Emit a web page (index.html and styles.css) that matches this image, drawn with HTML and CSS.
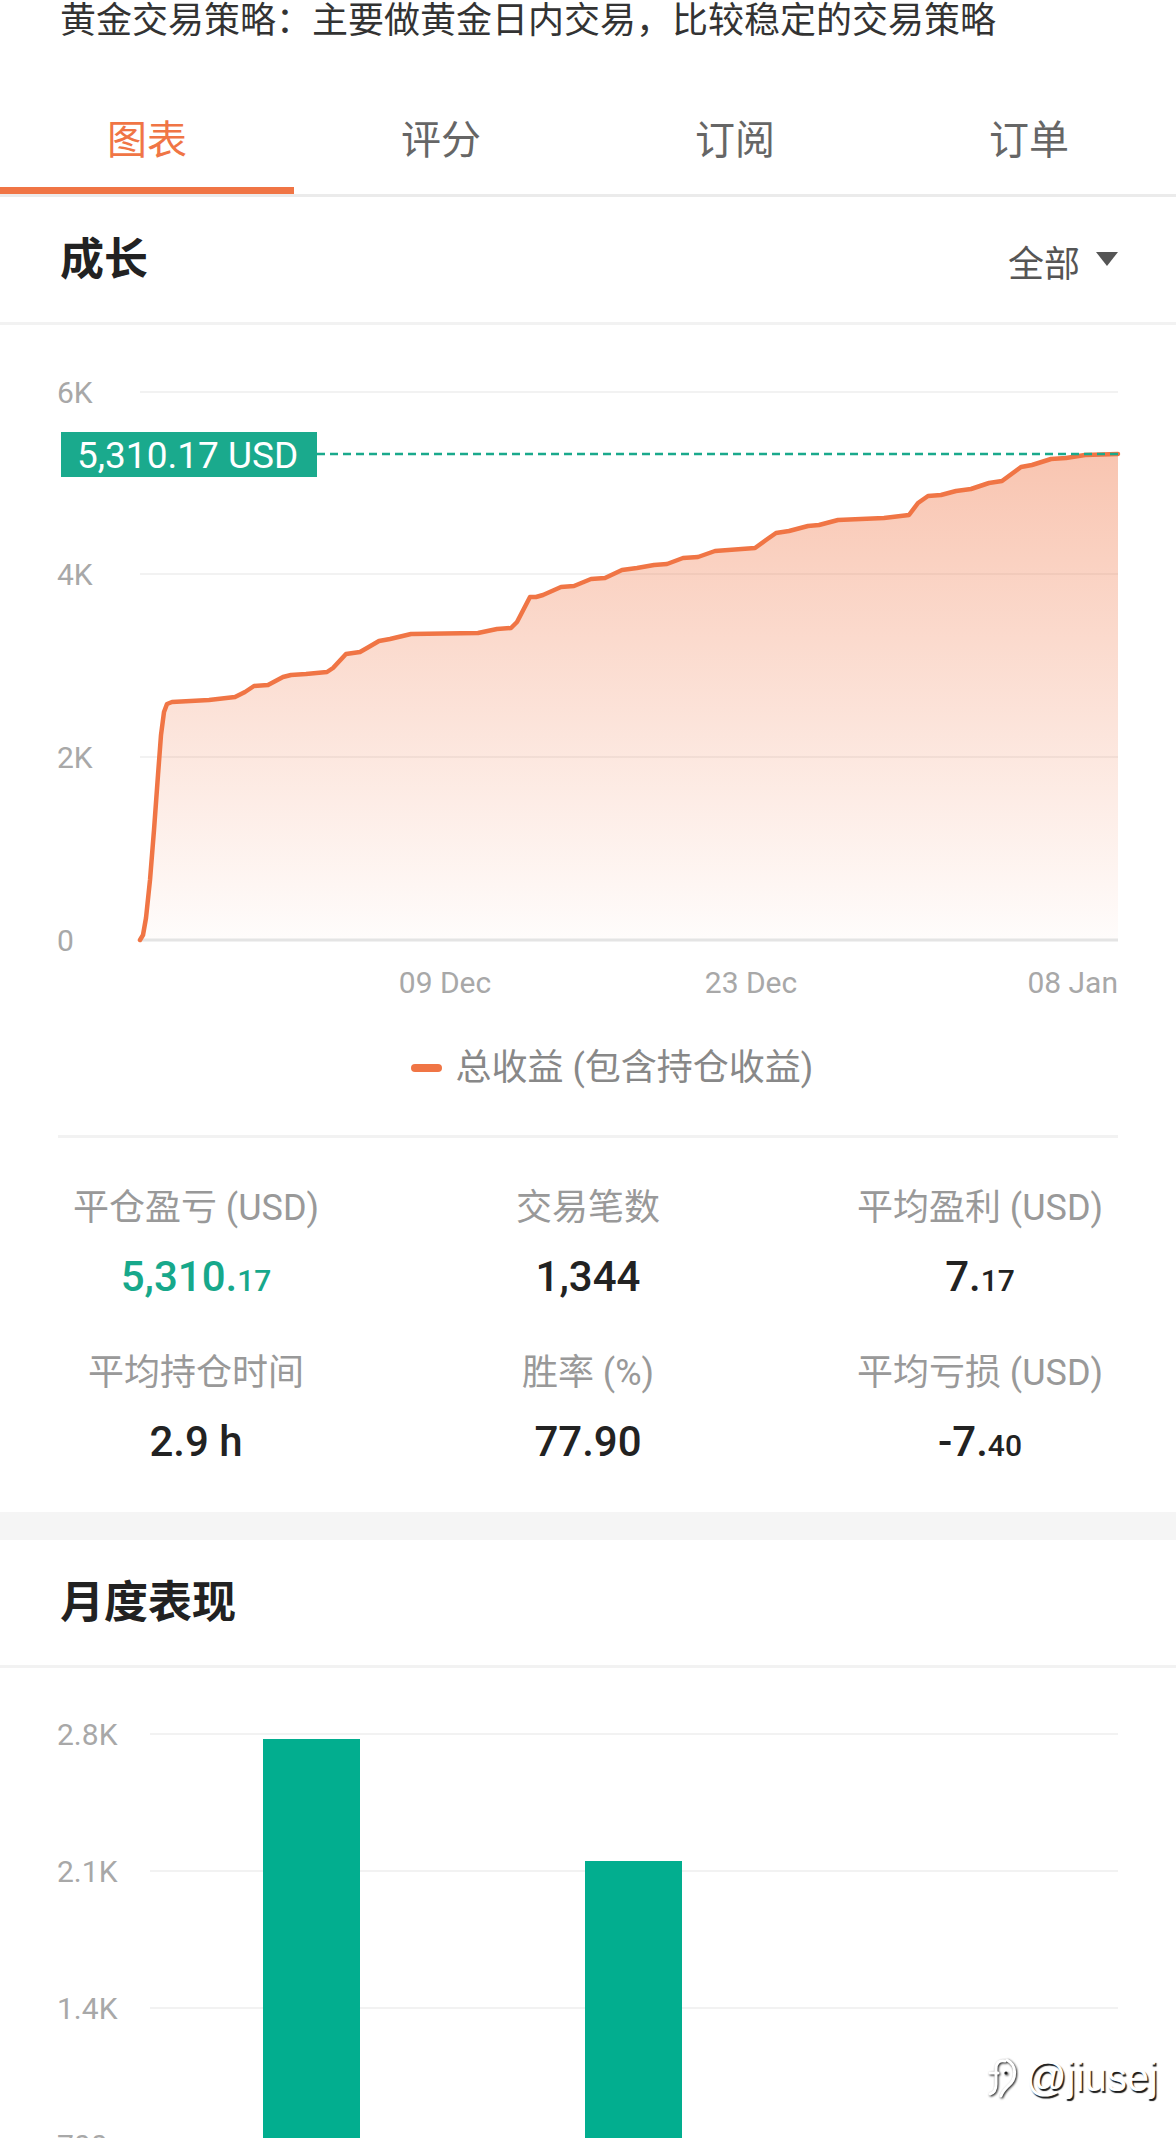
FILE: index.html
```html
<!DOCTYPE html>
<html lang="zh-CN">
<head>
<meta charset="utf-8">
<title>黄金交易策略</title>
<link rel="stylesheet" href="styles.css">
</head>
<body>
<div class="page">
  <div class="intro">黄金交易策略：主要做黄金日内交易，比较稳定的交易策略</div>

  <nav class="tabs">
    <div class="tab active">图表</div>
    <div class="tab">评分</div>
    <div class="tab">订阅</div>
    <div class="tab">订单</div>
  </nav>

  <section class="card">
    <header class="section-head">
      <h2 class="section-title">成长</h2>
      <div class="range">全部
        <svg class="caret" width="24" height="16" viewBox="0 0 24 16"><polygon points="1,1 23,1 12,15" fill="#555"/></svg>
      </div>
    </header>

    <svg class="growth-chart" width="1176" height="685" viewBox="0 0 1176 685">
      <defs>
        <linearGradient id="areaFill" x1="0" y1="129" x2="0" y2="615" gradientUnits="userSpaceOnUse">
          <stop offset="0" stop-color="#f07545" stop-opacity="0.42"/>
          <stop offset="1" stop-color="#f07545" stop-opacity="0.02"/>
        </linearGradient>
      </defs>
      <g class="grid">
        <line x1="140" y1="67" x2="1118" y2="67"/>
        <line x1="140" y1="249" x2="1118" y2="249"/>
        <line x1="140" y1="432" x2="1118" y2="432"/>
      </g>
      <path class="area" fill="url(#areaFill)" d="M140,615 L143,610 L146,593 L150,555 L154,505 L158,450 L161,410 L164,387 L167,379 L172,377 L209,375 L235,372 L245,367 L254,361 L268,360 L283,352 L291,350 L306,349 L327,347 L333,343 L346,329 L360,327 L367,323 L379,316 L390,314 L411,309 L478,308 L497,304 L511,303 L517,297 L530,272 L536,272 L543,270 L561,262 L574,261 L591,254 L605,253 L622,245 L637,243 L654,240 L667,239 L683,233 L698,232 L715,226 L755,223 L766,215 L776,208 L789,206 L808,201 L819,200 L838,195 L884,193 L909,190 L918,178 L928,171 L941,170 L956,166 L971,164 L989,158 L1002,156 L1021,142 L1032,140 L1051,134 L1066,133 L1085,130 L1118,129 L1118,615 Z"/>
      <line class="axis" x1="140" y1="615" x2="1118" y2="615"/>
      <polyline class="curve" points="140,615 143,610 146,593 150,555 154,505 158,450 161,410 164,387 167,379 172,377 209,375 235,372 245,367 254,361 268,360 283,352 291,350 306,349 327,347 333,343 346,329 360,327 367,323 379,316 390,314 411,309 478,308 497,304 511,303 517,297 530,272 536,272 543,270 561,262 574,261 591,254 605,253 622,245 637,243 654,240 667,239 683,233 698,232 715,226 755,223 766,215 776,208 789,206 808,201 819,200 838,195 884,193 909,190 918,178 928,171 941,170 956,166 971,164 989,158 1002,156 1021,142 1032,140 1051,134 1066,133 1085,130 1118,129"/>
      <line class="mark-line" x1="317" y1="129" x2="1118" y2="129"/>
      <rect class="mark-badge" x="61" y="107" width="256" height="45"/>
      <text class="mark-text" x="77" y="143">5,310.17 USD</text>
      <g class="ylabels">
        <text x="57" y="67">6K</text>
        <text x="57" y="249">4K</text>
        <text x="57" y="432">2K</text>
        <text x="57" y="615">0</text>
      </g>
      <g class="xlabels">
        <text x="445" y="657" text-anchor="middle">09 Dec</text>
        <text x="751" y="657" text-anchor="middle">23 Dec</text>
        <text x="1118" y="657" text-anchor="end">08 Jan</text>
      </g>
    </svg>

    <div class="legend"><span class="legend-dash"></span><span class="legend-text">总收益 (包含持仓收益)</span></div>
    <div class="divider"></div>

    <div class="stats">
      <div class="stat">
        <div class="stat-label">平仓盈亏 (USD)</div>
        <div class="stat-value positive">5,310.<span class="frac">17</span></div>
      </div>
      <div class="stat">
        <div class="stat-label">交易笔数</div>
        <div class="stat-value">1,344</div>
      </div>
      <div class="stat">
        <div class="stat-label">平均盈利 (USD)</div>
        <div class="stat-value">7.<span class="frac">17</span></div>
      </div>
      <div class="stat">
        <div class="stat-label">平均持仓时间</div>
        <div class="stat-value">2.9 h</div>
      </div>
      <div class="stat">
        <div class="stat-label">胜率 (%)</div>
        <div class="stat-value">77.90</div>
      </div>
      <div class="stat">
        <div class="stat-label">平均亏损 (USD)</div>
        <div class="stat-value">-7.<span class="frac">40</span></div>
      </div>
    </div>
  </section>

  <div class="band"></div>

  <section class="card">
    <header class="section-head">
      <h2 class="section-title">月度表现</h2>
    </header>
    <svg class="bar-chart" width="1176" height="640" viewBox="0 0 1176 640">
      <g class="grid">
        <line x1="150" y1="66" x2="1118" y2="66"/>
        <line x1="150" y1="203" x2="1118" y2="203"/>
        <line x1="150" y1="340" x2="1118" y2="340"/>
        <line x1="150" y1="477" x2="1118" y2="477"/>
      </g>
      <rect class="bar" x="263" y="71" width="97" height="543"/>
      <rect class="bar" x="585" y="193" width="97" height="421"/>
      <g class="ylabels">
        <text x="57" y="66">2.8K</text>
        <text x="57" y="203">2.1K</text>
        <text x="57" y="340">1.4K</text>
        <text x="57" y="477">700</text>
      </g>
    </svg>
  </section>

  <div class="watermark">
    <svg class="wm-icon" width="36" height="42" viewBox="0 0 36 42">
      <path d="M19 5 C13 4 10 7 10 13 L10 28 C10 34 8 37 4 38" />
      <path d="M4 17 L12 17" />
      <circle cx="20" cy="17" r="1.6" class="dot"/>
      <path d="M21 4 C31 9 31 23 22 30 C19 33 16 36 15 40" />
    </svg>
    <span class="wm-text">@jiusej</span>
  </div>
</div>
</body>
</html>
```

FILE: styles.css
```css
* { box-sizing: border-box; }

html, body {
  margin: 0;
  padding: 0;
  background: #ffffff;
}

body {
  font-family: Roboto, "Noto Sans CJK SC", sans-serif;
  color: #333;
  overflow: hidden;
}

.page {
  position: relative;
  width: 1176px;
}

.intro {
  padding: 0 60px;
  font-size: 36px;
  line-height: 42px;
  color: #333;
  margin-bottom: 38px;
  white-space: nowrap;
}

.tabs {
  display: grid;
  grid-template-columns: repeat(4, 1fr);
  border-bottom: 3px solid #ebebeb;
}

.tab {
  position: relative;
  height: 114px;
  display: flex;
  align-items: center;
  justify-content: center;
  font-size: 40px;
  color: #666;
}

.tab.active {
  color: #f07545;
}

.tab.active::after {
  content: "";
  position: absolute;
  left: 0;
  right: 0;
  bottom: 0;
  height: 7px;
  background: #f07545;
}

.section-head {
  height: 128px;
  border-bottom: 3px solid #f2f2f2;
  display: flex;
  align-items: center;
  justify-content: space-between;
  padding: 2px 57px 0 60px;
}

.section-title {
  margin: 0;
  font-size: 44px;
  font-weight: 700;
  color: #222;
  line-height: 1.2;
}

.range {
  display: flex;
  align-items: center;
  gap: 15px;
  font-size: 36px;
  color: #555;
}

.caret {
  display: block;
  margin-top: -4px;
}

.growth-chart,
.bar-chart {
  display: block;
}

.grid line {
  stroke: #f2f2f2;
  stroke-width: 2;
}

.axis {
  stroke: #e4e4e4;
  stroke-width: 3;
}

.curve {
  fill: none;
  stroke: #f07545;
  stroke-width: 4.5;
  stroke-linejoin: round;
  stroke-linecap: round;
}

.mark-line {
  stroke: #1aa98c;
  stroke-width: 2.5;
  stroke-dasharray: 8 5;
}

.mark-badge {
  fill: #1aaa8d;
}

.mark-text {
  font-family: Roboto, sans-serif;
  font-size: 37px;
  fill: #ffffff;
}

.ylabels text,
.xlabels text {
  font-family: Roboto, sans-serif;
  font-size: 30px;
  fill: #a8a8a8;
  dominant-baseline: central;
}

.legend {
  margin-top: 34px;
  height: 48px;
  display: flex;
  align-items: center;
  justify-content: center;
  gap: 14px;
  padding-left: 48px;
}

.legend-dash {
  width: 31px;
  height: 8px;
  border-radius: 4px;
  background: #f07545;
}

.legend-text {
  font-size: 36px;
  line-height: 48px;
  color: #888;
}

.divider {
  margin: 43px 58px 0;
  height: 3px;
  background: #f2f2f2;
}

.stats {
  display: grid;
  grid-template-columns: repeat(3, 1fr);
  row-gap: 43px;
  padding: 46px 0 41px;
}

.stat {
  display: flex;
  flex-direction: column;
  align-items: center;
  gap: 20px;
}

.stat-label {
  font-size: 36px;
  line-height: 48px;
  color: #999;
  white-space: nowrap;
}

.stat-value {
  font-family: Roboto, sans-serif;
  font-size: 42px;
  line-height: 50px;
  font-weight: 500;
  color: #222;
  white-space: nowrap;
}

.stat-value.positive {
  color: #17a88b;
}

.frac {
  font-size: 30px;
}

.band {
  height: 28px;
  background: #f5f5f5;
}

.bar {
  fill: #02ae8f;
}

.watermark {
  position: absolute;
  left: 986px;
  top: 2054px;
  display: flex;
  align-items: center;
  gap: 4px;
}

.wm-icon {
  display: block;
  filter: drop-shadow(1.5px 1.5px 0.8px rgba(0, 0, 0, 0.9));
}

.wm-icon path {
  fill: none;
  stroke: #ffffff;
  stroke-width: 3;
  stroke-linecap: round;
}

.wm-icon .dot {
  fill: #222;
}

.wm-text {
  font-family: "Liberation Sans", sans-serif;
  font-size: 40px;
  line-height: 46px;
  color: #ffffff;
  text-shadow: 1.5px 1.5px 1px rgba(0, 0, 0, 0.9);
}
```
